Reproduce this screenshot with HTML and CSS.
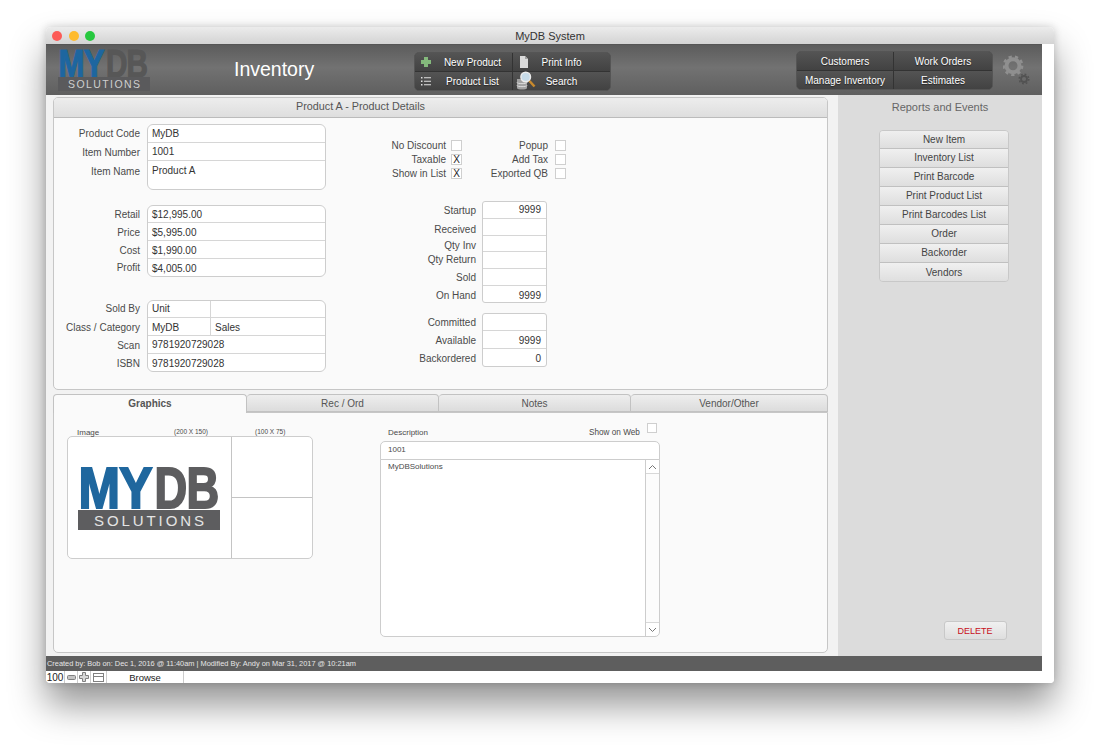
FILE: index.html
```html
<!DOCTYPE html>
<html lang="en">
<head>
  <meta charset="UTF-8">
  <title>MyDB System</title>
  <link rel="stylesheet" href="styles.css">
</head>
<body>
  <div class="window">
    <div class="titlebar">
      <span class="light red"></span>
      <span class="light yellow"></span>
      <span class="light green"></span>
      <span class="title">MyDB System</span>
    </div>

    <div class="content">
      <div class="header">
        <svg class="logo" width="92" height="52" viewBox="0 -8 92 52">
          <text class="logo-my" transform="translate(0.500 28.500) scale(0.82 1)">MY</text>
          <text class="logo-db" transform="translate(48 28.500) scale(0.78 1)">DB</text>
          <rect x="0" y="29" width="92" height="14" fill="#5a5a5c"/>
          <text x="46" y="40" class="logo-sub" text-anchor="middle" textLength="72">SOLUTIONS</text>
        </svg>
        <div class="page-title">Inventory</div>

        <div class="nav-group nav-left">
          <div class="nav-btn">
            <svg class="nav-icon" width="12" height="12" viewBox="0 0 12 12"><path d="M4 1h4v3h3v4H8v3H4V8H1V4h3z" fill="#84b97c"/></svg>
            <span class="nav-text">New Product</span>
          </div>
          <div class="nav-btn">
            <svg class="nav-icon" width="12" height="12" viewBox="0 0 12 12"><path d="M2 0h5l3 3v9H2z" fill="#dadada"/><path d="M7 0l3 3H7z" fill="#a0a0a0"/></svg>
            <span class="nav-text">Print Info</span>
          </div>
          <div class="nav-btn">
            <svg class="nav-icon" width="12" height="12" viewBox="0 0 12 12"><path d="M1 2h1.500v1.500H1zM1 5.500h1.500V7H1zM1 9h1.500v1.500H1zM4 2.300h7v1H4zM4 5.800h7v1H4zM4 9.300h7v1H4z" fill="#e0e0e0"/></svg>
            <span class="nav-text">Product List</span>
          </div>
          <div class="nav-btn">
            <svg class="nav-icon search" width="21" height="21" viewBox="0 0 21 21">
              <path d="M2 9h10v9c0 2-10 2-10 0z" fill="#a2a2a2"/>
              <path d="M2 12.500c0 1.500 10 1.500 10 0M2 15.500c0 1.500 10 1.500 10 0" stroke="#dcdcdc" fill="none"/>
              <circle cx="10.700" cy="7" r="4.800" fill="#c7dbe8" stroke="#ececec" stroke-width="1.500"/>
              <path d="M14.500 11l5 5.500" stroke="#c98a2d" stroke-width="2.500"/>
            </svg>
            <span class="nav-text">Search</span>
          </div>
        </div>

        <div class="nav-group nav-right">
          <div class="nav-btn"><span class="nav-text">Customers</span></div>
          <div class="nav-btn"><span class="nav-text">Work Orders</span></div>
          <div class="nav-btn"><span class="nav-text">Manage Inventory</span></div>
          <div class="nav-btn"><span class="nav-text">Estimates</span></div>
        </div>

        <svg class="gears" width="30" height="32" viewBox="0 0 30 32">
          <circle cx="10" cy="10.700" r="6.500" fill="none" stroke="#8f8f8f" stroke-width="4"/>
          <circle cx="10" cy="10.700" r="9.200" fill="none" stroke="#8f8f8f" stroke-width="2.400" stroke-dasharray="3.300 3.130"/>
          <circle cx="21" cy="24" r="3" fill="none" stroke="#525252" stroke-width="1.800"/>
          <circle cx="21" cy="24" r="4.800" fill="none" stroke="#525252" stroke-width="1.500" stroke-dasharray="1.800 1.970"/>
        </svg>
      </div>

      <div class="main">
        <div class="left">
          <div class="panel details">
            <div class="panel-head">Product A - Product Details</div>
            <div class="details-body">
              <div class="col-fields">
                <div class="group">
                  <div class="labels">
                    <div class="r19">Product Code</div>
                    <div class="r20">Item Number</div>
                    <div class="r27">Item Name</div>
                  </div>
                  <div class="fields wide">
                    <div class="field r19">MyDB</div>
                    <div class="field r18">1001</div>
                    <div class="field r29">Product A</div>
                  </div>
                </div>
                <div class="group">
                  <div class="labels">
                    <div class="r18 low">Retail</div>
                    <div class="r18 low">Price</div>
                    <div class="r18 low">Cost</div>
                    <div class="r18">Profit</div>
                  </div>
                  <div class="fields wide">
                    <div class="field r18 low">$12,995.00</div>
                    <div class="field r18 low">$5,995.00</div>
                    <div class="field r18 low">$1,990.00</div>
                    <div class="field r18 low">$4,005.00</div>
                  </div>
                </div>
                <div class="group">
                  <div class="labels">
                    <div class="r18">Sold By</div>
                    <div class="r18 low">Class / Category</div>
                    <div class="r18 low">Scan</div>
                    <div class="r18 low">ISBN</div>
                  </div>
                  <div class="fields wide">
                    <div class="field r18 split"><span class="cell">Unit</span><span class="cell"></span></div>
                    <div class="field r18 low split"><span class="cell">MyDB</span><span class="cell">Sales</span></div>
                    <div class="field r18">9781920729028</div>
                    <div class="field r18 low">9781920729028</div>
                  </div>
                </div>
              </div>

              <div class="col-middle">
                <div class="checks">
                  <div class="check-row"><span class="check-label first">No Discount</span><span class="box"></span><span class="check-label second">Popup</span><span class="box"></span></div>
                  <div class="check-row"><span class="check-label first">Taxable</span><span class="box">X</span><span class="check-label second">Add Tax</span><span class="box"></span></div>
                  <div class="check-row"><span class="check-label first">Show in List</span><span class="box">X</span><span class="check-label second">Exported QB</span><span class="box"></span></div>
                </div>
                <div class="group stock">
                  <div class="labels narrow">
                    <div class="r19">Startup</div>
                    <div class="r19">Received</div>
                    <div class="r13">Qty Inv</div>
                    <div class="r16">Qty Return</div>
                    <div class="r18 low">Sold</div>
                    <div class="r17 low">On Hand</div>
                  </div>
                  <div class="fields num">
                    <div class="field r18">9999</div>
                    <div class="field r17"></div>
                    <div class="field r16"></div>
                    <div class="field r17"></div>
                    <div class="field r17"></div>
                    <div class="field r17 low">9999</div>
                  </div>
                </div>
                <div class="group stock second-stock">
                  <div class="labels narrow">
                    <div class="r18 low">Committed</div>
                    <div class="r18 low">Available</div>
                    <div class="r18 low">Backordered</div>
                  </div>
                  <div class="fields num">
                    <div class="field r18"></div>
                    <div class="field r18 low">9999</div>
                    <div class="field r18 low">0</div>
                  </div>
                </div>
              </div>
            </div>
          </div>

          <div class="tabs">
            <div class="tab active">Graphics</div>
            <div class="tab">Rec / Ord</div>
            <div class="tab">Notes</div>
            <div class="tab last">Vendor/Other</div>
          </div>
          <div class="panel tab-panel">
            <div class="graphics">
              <div class="image-caps">
                <span class="cap-image">Image</span>
                <span class="cap-small cap-200">(200 X 150)</span>
                <span class="cap-small">(100 X 75)</span>
              </div>
              <div class="image-box">
                <div class="image-main">
                  <svg width="142" height="77" viewBox="0 -12 142 77">
                    <text class="big-my" transform="translate(0.500 42.500) scale(0.86 1)">MY</text>
                    <text class="big-db" transform="translate(76.500 42.500) scale(0.78 1)">DB</text>
                    <rect x="0" y="45" width="142" height="20" fill="#5d5d5f"/>
                    <text x="71" y="60.500" class="big-sub" text-anchor="middle" textLength="110">SOLUTIONS</text>
                  </svg>
                </div>
                <div class="image-side">
                  <div class="thumb"></div>
                  <div class="thumb"></div>
                </div>
              </div>
            </div>
            <div class="description">
              <div class="desc-caps">
                <span class="cap-desc">Description</span>
                <span class="cap-web">Show on Web</span>
                <span class="box web-box"></span>
              </div>
              <div class="desc-line">1001</div>
              <div class="desc-area">
                <div class="desc-text">MyDBSolutions</div>
                <div class="scrollbar">
                  <div class="arrow"><svg width="9" height="6" viewBox="0 0 9 6"><path d="M1 5l3.500-3.500L8 5" fill="none" stroke="#777"/></svg></div>
                  <div class="track"></div>
                  <div class="arrow"><svg width="9" height="6" viewBox="0 0 9 6"><path d="M1 1l3.500 3.500L8 1" fill="none" stroke="#777"/></svg></div>
                </div>
              </div>
            </div>
          </div>
        </div>

        <div class="side">
          <div class="side-title">Reports and Events</div>
          <div class="side-btns">
            <div class="side-btn">New Item</div>
            <div class="side-btn">Inventory List</div>
            <div class="side-btn">Print Barcode</div>
            <div class="side-btn">Print Product List</div>
            <div class="side-btn">Print Barcodes List</div>
            <div class="side-btn">Order</div>
            <div class="side-btn">Backorder</div>
            <div class="side-btn">Vendors</div>
          </div>
          <div class="delete-btn">DELETE</div>
        </div>
      </div>

      <div class="status">Created by: Bob on: Dec 1, 2016 @ 11:40am | Modified By: Andy on Mar 31, 2017 @ 10:21am</div>
    </div>

    <div class="bottom">
      <span class="zoom-level">100</span>
      <span class="tool tool-minus"><svg width="9" height="5" viewBox="0 0 9 5"><rect x="0.500" y="0.500" width="8" height="4" rx="1" fill="#c4c4c4" stroke="#808080"/></svg></span>
      <span class="tool tool-plus"><svg width="10" height="10" viewBox="0 0 10 10"><path d="M3.500 0.500h3v3h3v3h-3v3h-3v-3h-3v-3h3z" fill="#d8d8d8" stroke="#808080"/></svg></span>
      <span class="tool tool-window"><svg width="11" height="9" viewBox="0 0 11 9"><rect x="0.500" y="0.500" width="10" height="8" fill="#fff" stroke="#808080"/><path d="M0.500 3.500h10" stroke="#808080"/></svg></span>
      <span class="mode">Browse</span>
    </div>
  </div>
</body>
</html>
```

FILE: styles.css
```css
html, body {
  margin: 0;
  padding: 0;
  background: #fff;
}

body {
  font-family: "Liberation Sans", Arial, sans-serif;
  font-size: 10px;
  color: #4a4a4a;
  height: 749px;
  overflow: hidden;
}

.window {
  width: 1008px;
  height: 656px;
  margin: 27px 0 0 46px;
  background: #fff;
  border-radius: 5px 5px 4px 4px;
  box-shadow: 0 22px 36px rgba(0, 0, 0, 0.42), 0 0 8px rgba(0, 0, 0, 0.18);
  display: flex;
  flex-direction: column;
  overflow: hidden;
}

/* title bar */
.titlebar {
  height: 17px;
  flex: none;
  display: flex;
  align-items: center;
  padding-left: 6px;
  gap: 6.500px;
  background: linear-gradient(#ececec, #d3d3d3);
  box-sizing: border-box;
  position: relative;
}

.light {
  width: 10px;
  height: 10px;
  border-radius: 50%;
}

.red { background: #fc5b57; }
.yellow { background: #febb2e; }
.green { background: #27c83f; }

.title {
  position: absolute;
  left: 0;
  right: 0;
  text-align: center;
  font-size: 11px;
  color: #333;
}

.content {
  width: 996px;
  flex: none;
}

/* dark header */
.header {
  height: 51px;
  display: flex;
  align-items: flex-start;
  background: linear-gradient(#5c5c5c, #727272 45%, #5f5f5f);
  border-top: 1px solid #555;
  box-sizing: border-box;
}

.logo {
  margin: -5px 0 -5px 12px;
  flex: none;
}

.logo-my, .logo-db, .big-my, .big-db {
  font-weight: bold;
}

.logo-my {
  font-size: 38px;
  letter-spacing: -1px;
  fill: #1d66a0;
  stroke: #1d66a0;
  stroke-width: 1.200px;
}

.logo-db {
  font-size: 38px;
  letter-spacing: -1px;
  fill: #575757;
  stroke: #575757;
  stroke-width: 1.200px;
}

.logo-sub {
  font-size: 10.500px;
  fill: #cfcfcf;
}

.page-title {
  margin: 12px 0 0 84px;
  width: 180px;
  flex: none;
  font-size: 19.500px;
  line-height: 24px;
  color: #fff;
}

.nav-group {
  display: grid;
  grid-template-rows: 19px 18px;
  background: #444;
  border: 1px solid #555;
  border-radius: 5px;
  overflow: hidden;
  box-sizing: border-box;
  height: 39px;
  flex: none;
}

.nav-left {
  width: 197px;
  margin-top: 7px;
  grid-template-columns: 98px 1fr;
}

.nav-right {
  width: 197px;
  margin: 6px 0 0 185px;
  grid-template-columns: 97px 1fr;
}

.nav-btn {
  display: flex;
  align-items: center;
  justify-content: center;
  color: #fff;
  font-size: 10px;
  text-shadow: 0 1px 1px rgba(0, 0, 0, 0.5);
  background: linear-gradient(#545454, #424242);
  border-right: 1px solid #333;
  border-bottom: 1px solid #333;
  position: relative;
}

.nav-btn:nth-child(2n) { border-right: 0; }
.nav-btn:nth-child(n+3) { border-bottom: 0; }

.nav-icon {
  position: absolute;
  left: 5px;
  top: 3px;
}

.nav-icon.search {
  left: 2px;
  top: -2px;
}

.nav-left .nav-btn:nth-child(odd) .nav-text { margin-left: 18px; }

.gears {
  margin: 10px 0 0 10px;
  flex: none;
}

/* left part */
.main {
  height: 561px;
  display: flex;
}

.left {
  width: 792px;
  flex: none;
  background: #f2f2f2;
  padding: 2px 10px 0 7px;
  box-sizing: border-box;
}

.panel {
  background: #fafafa;
  border: 1px solid #c6c6c6;
  box-sizing: border-box;
}

.details {
  height: 293px;
  border-radius: 5px;
  overflow: hidden;
}

.panel-head {
  height: 20px;
  line-height: 16px;
  padding-right: 160px;
  text-align: center;
  font-size: 10.800px;
  color: #555;
  background: linear-gradient(#ededed, #dedede);
  border-bottom: 1px solid #bbb;
  box-sizing: border-box;
}

.details-body {
  display: flex;
}

.col-fields {
  width: 310px;
  flex: none;
  padding-top: 6px;
  box-sizing: border-box;
}

.col-fields .group { margin-bottom: 15px; }
.col-fields .group:nth-child(2) { margin-bottom: 23px; }

.group {
  display: flex;
}

.labels {
  width: 86px;
  margin-right: 7px;
  text-align: right;
  flex: none;
}

.labels.narrow {
  width: 112px;
  margin-right: 6px;
}

.r13 { height: 13px; line-height: 13px; }
.r16 { height: 16px; line-height: 16px; }
.r17 { height: 17px; line-height: 17px; }
.r18 { height: 18px; line-height: 18px; }
.r19 { height: 19px; line-height: 19px; }
.r20 { height: 20px; line-height: 20px; }
.r27 { height: 27px; line-height: 17px; }
.r29 { height: 29px; line-height: 19px; }
.low { line-height: 20px; }

.fields {
  background: #fff;
  border: 1px solid #cdcdcd;
  border-radius: 6px;
  box-sizing: border-box;
  overflow: hidden;
}

.fields.wide { width: 179px; }

.fields.num {
  width: 65px;
  border-radius: 3px;
  text-align: right;
}

.field {
  padding: 0 5px 0 4px;
  color: #333;
  border-bottom: 1px solid #d6d6d6;
  box-sizing: border-box;
}

.field:first-child { margin-top: -1px; }

.field:last-child {
  border-bottom: 0;
  margin-bottom: -1px;
}

.split {
  display: flex;
  padding: 0;
}

.cell {
  padding: 0 4px;
  box-sizing: border-box;
}

.cell:first-child {
  width: 63px;
  border-right: 1px solid #d6d6d6;
}

.col-middle {
  width: 200px;
  flex: none;
}

.checks {
  padding-top: 20px;
  height: 83px;
  box-sizing: border-box;
}

.check-row {
  display: flex;
  height: 14px;
  align-items: center;
}

.check-label {
  text-align: right;
  margin-right: 5px;
  flex: none;
}

.check-label.first { width: 82px; }
.check-label.second { width: 86px; margin-right: 7px; }

.box {
  width: 11px;
  height: 11px;
  flex: none;
  border: 1px solid #cfcfcf;
  background: #fff;
  box-sizing: border-box;
  text-align: center;
  font-size: 10px;
  line-height: 9px;
  color: #222;
}

.stock.second-stock { margin-top: 10px; }

/* tabs */
.tabs {
  display: flex;
  height: 19px;
  margin-top: 4px;
  position: relative;
  z-index: 1;
}

.tab {
  width: 192px;
  height: 18px;
  line-height: 17px;
  text-align: center;
  background: linear-gradient(#eeeeee, #dcdcdc);
  border: 1px solid #c2c2c2;
  border-left: 0;
  box-sizing: border-box;
  color: #555;
  border-radius: 4px 4px 0 0;
}

.tab.active {
  width: 194px;
  height: 19px;
  background: #fafafa;
  border-left: 1px solid #c2c2c2;
  border-bottom: 0;
  font-weight: bold;
}

.tab.last { width: 197px; }

.tab-panel {
  height: 241px;
  margin-top: -1px;
  border-radius: 0 0 5px 5px;
  display: flex;
  padding-left: 13px;
}

.graphics {
  width: 246px;
  flex: none;
}

.image-caps {
  height: 23px;
  display: flex;
  padding-top: 15px;
  box-sizing: border-box;
  font-size: 6.500px;
}

.cap-image {
  margin-left: 10px;
  width: 97px;
  font-size: 8px;
}

.cap-200 {
  width: 81px;
}

.image-box {
  width: 246px;
  height: 123px;
  background: #fff;
  border: 1px solid #cdcdcd;
  border-radius: 5px;
  box-sizing: border-box;
  display: flex;
}

.image-main {
  width: 164px;
  flex: none;
  padding: 16px 0 0 10px;
  box-sizing: border-box;
  border-right: 1px solid #c4c4c4;
}

.big-my {
  font-size: 58px;
  letter-spacing: -1px;
  fill: #1f679e;
  stroke: #1f679e;
  stroke-width: 2px;
}

.big-db {
  font-size: 58px;
  letter-spacing: -1px;
  fill: #5d5d5f;
  stroke: #5d5d5f;
  stroke-width: 2px;
}

.big-sub {
  font-size: 15px;
  fill: #e4e4e4;
}

.image-side {
  flex: 1;
  display: flex;
  flex-direction: column;
}

.thumb {
  flex: 1;
}

.thumb:first-child {
  border-bottom: 1px solid #c4c4c4;
}

.description {
  width: 280px;
  margin-left: 67px;
  flex: none;
}

.desc-caps {
  height: 28px;
  display: flex;
  align-items: flex-start;
  box-sizing: border-box;
  padding-top: 10px;
  font-size: 8px;
}

.cap-desc {
  margin: 5px 0 0 8px;
  width: 201px;
  flex: none;
}

.cap-web {
  margin-top: 5px;
  width: 58px;
  flex: none;
  font-size: 8.200px;
}

.web-box {
  width: 10px;
  height: 10px;
}

.desc-line {
  height: 19px;
  line-height: 15px;
  padding-left: 7px;
  font-size: 8px;
  background: #fff;
  border: 1px solid #cdcdcd;
  border-radius: 5px 5px 0 0;
  box-sizing: border-box;
}

.desc-area {
  height: 178px;
  margin-top: -1px;
  background: #fff;
  border: 1px solid #cdcdcd;
  border-radius: 0 0 5px 5px;
  box-sizing: border-box;
  display: flex;
  overflow: hidden;
}

.desc-text {
  flex: 1;
  padding: 2px 0 0 7px;
  font-size: 8px;
}

.scrollbar {
  width: 14px;
  flex: none;
  border-left: 1px solid #cdcdcd;
  display: flex;
  flex-direction: column;
  box-sizing: border-box;
}

.arrow {
  height: 13px;
  display: flex;
  align-items: center;
  justify-content: center;
}

.arrow:first-child { border-bottom: 1px solid #d8d8d8; }
.arrow:last-child { border-top: 1px solid #d8d8d8; }

.track { flex: 1; background: #fcfcfc; }

/* right sidebar */
.side {
  width: 204px;
  flex: none;
  background: #dcdcdc;
  display: flex;
  flex-direction: column;
  align-items: center;
  box-sizing: border-box;
}

.side-title {
  margin-top: 5px;
  height: 30px;
  font-size: 11px;
  line-height: 14px;
  color: #666;
}

.side-btns {
  width: 130px;
  margin-left: 8px;
  border: 1px solid #c8c8c8;
  border-radius: 4px;
  overflow: hidden;
  box-sizing: border-box;
}

.side-btn {
  height: 19px;
  line-height: 18px;
  text-align: center;
  color: #444;
  background: linear-gradient(#f0f0f0, #dedede);
  border-bottom: 1px solid #c0c0c0;
  box-sizing: border-box;
}

.side-btn:first-child {
  margin-top: -1px;
  padding-top: 1px;
}

.side-btn:last-child {
  border-bottom: 0;
  margin-bottom: -1px;
  padding-top: 1px;
}

.delete-btn {
  width: 63px;
  height: 19px;
  line-height: 18px;
  text-align: center;
  font-size: 9px;
  color: #c8101c;
  margin: 339px 0 0 70px;
  background: linear-gradient(#f0f0f0, #dedede);
  border: 1px solid #c8c8c8;
  border-radius: 3px;
  box-sizing: border-box;
}

.status {
  height: 15px;
  line-height: 15px;
  padding-left: 1px;
  font-size: 7.400px;
  color: #e6e6e6;
  background: #5e5e5e;
}

/* bottom bar */
.bottom {
  height: 12px;
  flex: none;
  display: flex;
  align-items: stretch;
  background: #fff;
  border-bottom-left-radius: 4px;
  font-size: 9.500px;
  color: #222;
}

.zoom-level {
  width: 19px;
  text-align: center;
  line-height: 14px;
  font-size: 10px;
  border-right: 1px solid #ccc;
  box-sizing: border-box;
}

.tool {
  display: flex;
  align-items: center;
  justify-content: center;
  border-right: 1px solid #ccc;
  box-sizing: border-box;
}

.tool-minus { width: 13px; }
.tool-plus { width: 13px; }
.tool-window { width: 16px; }

.mode {
  width: 77px;
  text-align: center;
  line-height: 14px;
  border-right: 1px solid #ccc;
  box-sizing: border-box;
}
```
